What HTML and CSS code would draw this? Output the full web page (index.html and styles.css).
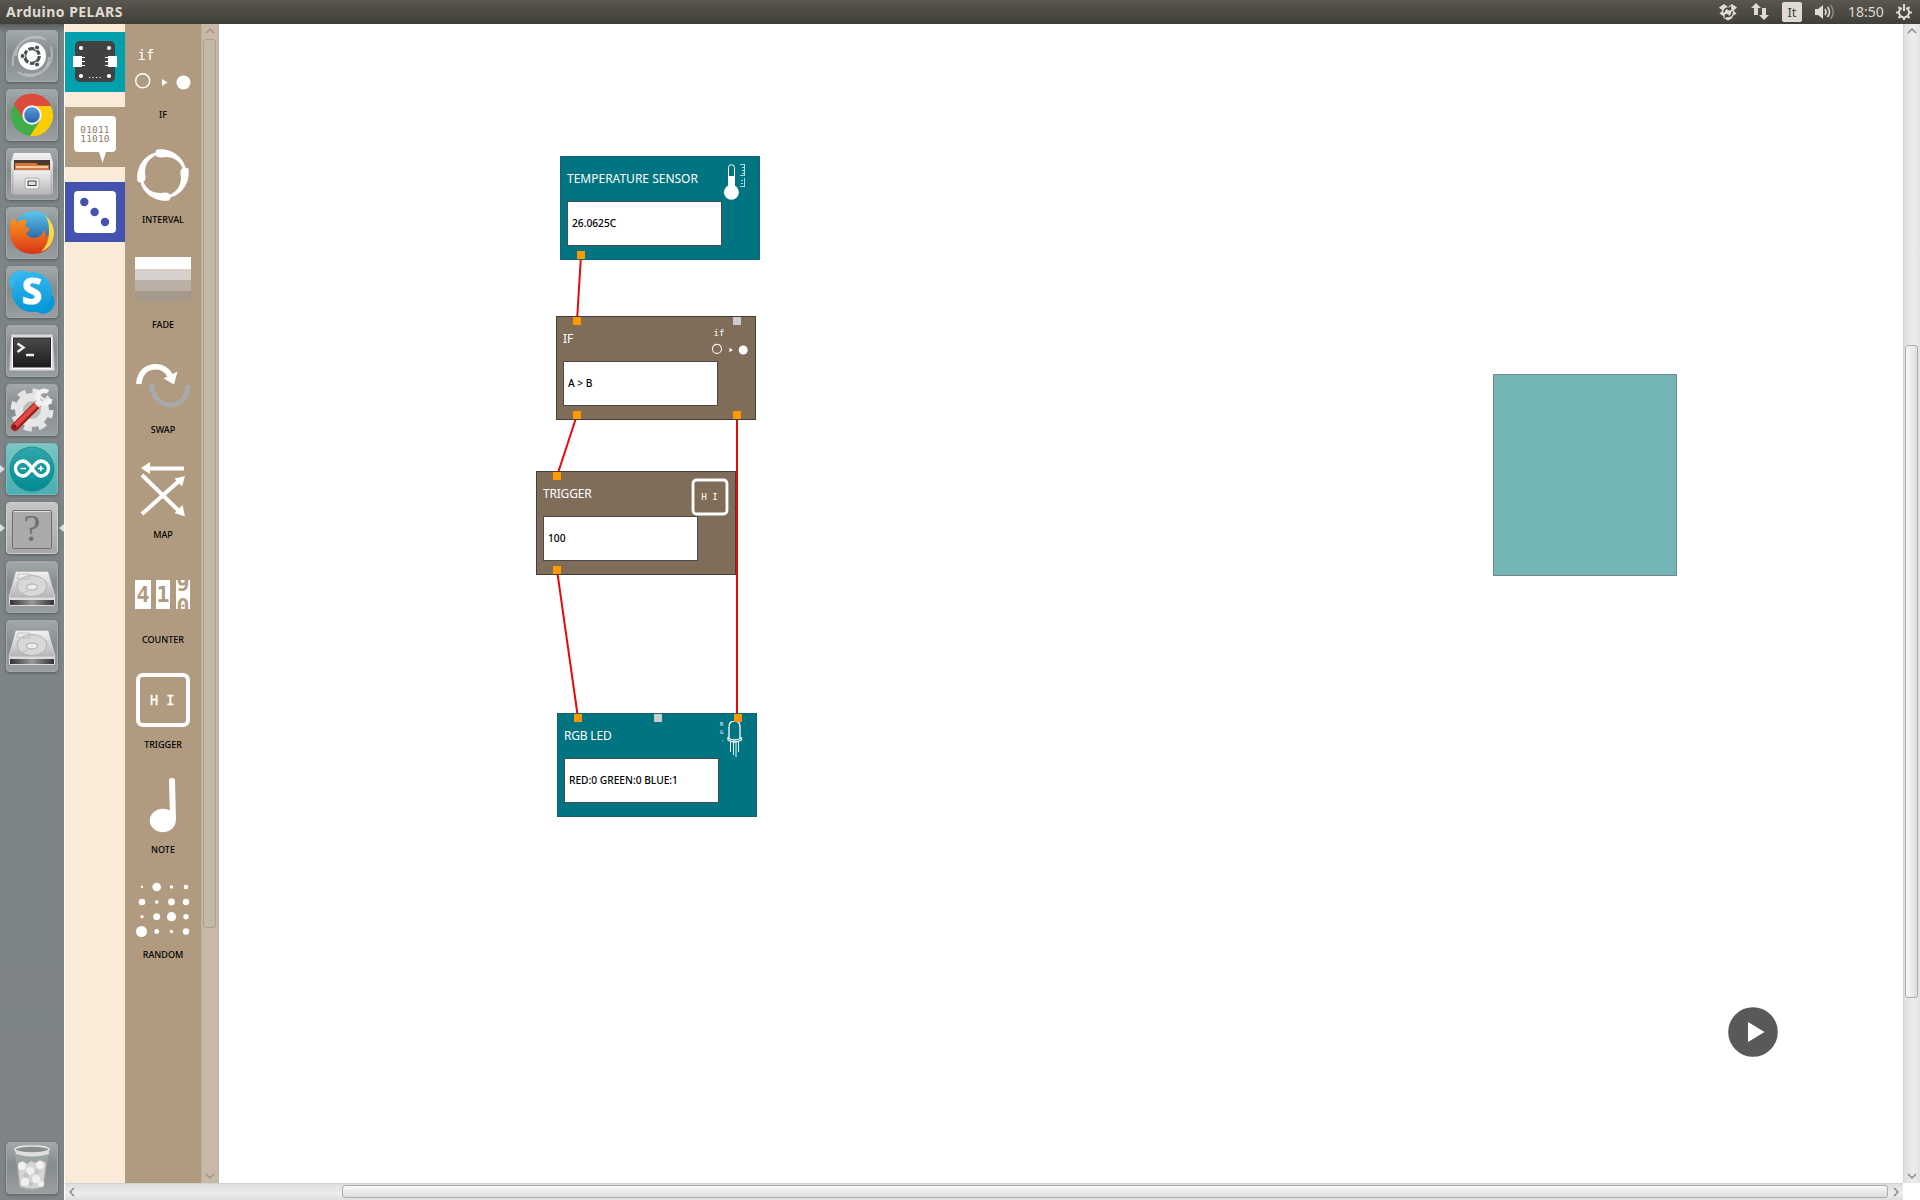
FILE: index.html
```html
<!DOCTYPE html>
<html lang="it">
<head>
<meta charset="utf-8">
<title>Arduino PELARS</title>
<link rel="stylesheet" href="styles.css">
</head>
<body>
<svg class="defs" width="0" height="0" aria-hidden="true">
  <defs>
    <linearGradient id="metal" x1="0" y1="0" x2="0" y2="1"><stop offset="0" stop-color="#f2f2f2"/><stop offset="1" stop-color="#b4b4b4"/></linearGradient>
    <linearGradient id="darkmetal" x1="0" y1="0" x2="1" y2="0"><stop offset="0" stop-color="#333"/><stop offset=".5" stop-color="#999"/><stop offset="1" stop-color="#333"/></linearGradient>
    <linearGradient id="screen" x1="0" y1="0" x2="0" y2="1"><stop offset="0" stop-color="#4a4a4a"/><stop offset="1" stop-color="#1c1c1c"/></linearGradient>
    <linearGradient id="fox" x1="0" y1="0" x2="0" y2="1"><stop offset="0" stop-color="#f7a01f"/><stop offset=".5" stop-color="#ee6a1c"/><stop offset="1" stop-color="#d83418"/></linearGradient>
    <linearGradient id="globe" x1="0" y1="0" x2="0" y2="1"><stop offset="0" stop-color="#5cc8ef"/><stop offset="1" stop-color="#153f8a"/></linearGradient>
    <linearGradient id="skype" x1="0" y1="0" x2="0" y2="1"><stop offset="0" stop-color="#35b6ec"/><stop offset="1" stop-color="#0597d9"/></linearGradient>
    <linearGradient id="teal" x1="0" y1="0" x2="0" y2="1"><stop offset="0" stop-color="#31a7aa"/><stop offset="1" stop-color="#008b90"/></linearGradient>
    <linearGradient id="blue" x1="0" y1="0" x2="0" y2="1"><stop offset="0" stop-color="#5b9bd8"/><stop offset="1" stop-color="#245fae"/></linearGradient>
  </defs>
  <symbol id="i-disk" viewBox="0 0 52 52">
    <path d="M10 11H42L49 37H3Z" fill="url(#metal)" stroke="#eee" stroke-width=".6"/>
    <ellipse cx="26" cy="25" rx="15" ry="10.5" fill="#d8d8d8" stroke="#b0b0b0"/><ellipse cx="26" cy="26" rx="5.5" ry="3" fill="#ececec" stroke="#aaa"/>
    <path d="M12 13H24V18H11ZM11 34L22 30" fill="none" stroke="#bbb" stroke-width=".8"/>
    <path d="M3 37H49V43Q49 45 47 45H5Q3 45 3 43Z" fill="#ddd"/><path d="M4 39H48V44H4Z" fill="url(#darkmetal)"/>
  </symbol>
</svg>

<header class="topbar">
  <span class="app-title">Arduino PELARS</span>
  <div class="tray">
    <svg class="t-dropbox" width="18" height="18" viewBox="0 0 18 18"><path d="M5 1L9 4L13 1L18 4.5L14.5 7.5L17.5 10.5L13.5 13.2V15L9 17.5L4.500 15V13.200L.5 10.500L3.500 7.500L0 4.500Z" fill="#dfdbd2"/><path d="M5 9.500A4 4 0 0 1 11.500 6M13 8.500A4 4 0 0 1 6.500 12.500M11.500 3.500V6.500H8.500M6.500 15V12H9.500" fill="none" stroke="#45433c" stroke-width="1.500"/></svg>
    <svg class="t-net" width="18" height="17" viewBox="0 0 18 17"><path d="M5 0L10 5H7V12H3V5H0ZM13 17L8 12H11V5H15V12H18Z" fill="#dfdbd2"/></svg>
    <span class="lang">It</span>
    <svg class="t-sound" width="21" height="16" viewBox="0 0 21 16"><path d="M0 5H3L8 1V15L3 11H0Z" fill="#dfdbd2"/><path d="M10 5Q12 8 10 11M12.500 3Q16.500 8 12.500 13" fill="none" stroke="#dfdbd2" stroke-width="1.600"/><path d="M15.500 1Q21 8 15.500 15" fill="none" stroke="#8c8980" stroke-width="1.600"/></svg>
    <span class="clock">18:50</span>
    <svg class="t-gear" width="16" height="16" viewBox="0 0 16 16"><path d="M5.700 4A5 5 0 1 0 10.300 4" fill="none" stroke="#dfdbd2" stroke-width="2"/><path d="M8 0V7M0 8.500H3M13 8.500H16M2.500 14L4.500 12M13.500 14L11.500 12M2.500 3L4.500 5M13.500 3L11.500 5M8 13V16" stroke="#dfdbd2" stroke-width="2.200"/></svg>
  </div>
</header>

<div class="desktop">
  <nav class="launcher">
    <div class="tile"><svg viewBox="0 0 52 52"><path d="M7 36C5 16 20 5 34 8M45 17C50 35 35 48 18 44M12 42C25 51 43 43 43 27M40 10C27 2 10 10 10 26" fill="none" stroke="#c6ced1" stroke-width="2" opacity=".65"/><circle cx="26" cy="26" r="14" fill="#fff"/><circle cx="26" cy="26" r="7.300" fill="none" stroke="#4c5254" stroke-width="3.200" stroke-dasharray="13.500 1.800"/><g fill="#4c5254" stroke="#fff"><circle cx="16.500" cy="26" r="2.500"/><circle cx="31" cy="17.500" r="2.500"/><circle cx="31" cy="34.500" r="2.500"/></g></svg></div>
    <div class="tile"><svg viewBox="0 0 52 52"><circle cx="26" cy="26" r="21" fill="#3fae49"/><path d="M26 26L8 15A21 21 0 0 1 45 17H26Z" fill="#dd4035"/><path d="M26 17H45A21 21 0 0 1 24 47L34.500 31Z" fill="#fccd05"/><path d="M8 15L18 31L26 17H45A21 21 0 0 0 8 15Z" fill="#dd4b3f"/><circle cx="26" cy="26" r="9.700" fill="#f4f4f4"/><circle cx="26" cy="26" r="7.800" fill="url(#blue)"/></svg></div>
    <div class="tile"><svg viewBox="0 0 52 52"><path d="M8 5H44L47 14V46H5V14Z" fill="url(#metal)"/><rect x="8" y="12" width="36" height="11" fill="#4b3a31"/><path d="M9 15H30L32 17H43V22H9Z" fill="#d9773b"/><path d="M10 19H42" stroke="#f4c9a0" stroke-width="2"/><rect x="7" y="22" width="38" height="25" rx="1" fill="url(#metal)" stroke="#999" stroke-width=".5"/><rect x="19" y="30" width="14" height="11" rx="2" fill="#f1f1f1" stroke="#aaa"/><rect x="22" y="33" width="8" height="4.500" fill="#ddd" stroke="#444"/></svg></div>
    <div class="tile"><svg viewBox="0 0 52 52"><circle cx="28" cy="24" r="20" fill="url(#globe)"/><path d="M6 11L11 15Q16 12 21 13L19 19L24 22L20 27Q25 33 32 30Q37 28 38 22Q41 27 39 32L44 25Q45 15 39 8Q49 16 48 29Q45 47 26 47Q8 46 4 29Q3 19 6 11Z" fill="url(#fox)"/><path d="M39 8Q49 17 48 28Q46 41 35 45Q44 35 43 23Q43 14 39 8Z" fill="#fbd84b"/></svg></div>
    <div class="tile"><svg viewBox="0 0 52 52"><circle cx="15" cy="16" r="11.500" fill="#35b6ec"/><circle cx="37" cy="36" r="11.500" fill="#0597d9"/><circle cx="26" cy="26" r="20" fill="url(#skype)"/><text x="26" y="38" text-anchor="middle" class="round" font-size="36" fill="#fff" stroke="#fff" stroke-width="1.200">S</text></svg></div>
    <div class="tile"><svg viewBox="0 0 52 52"><path d="M5 9H47L49 46H3Z" fill="#d9d9d9" stroke="#888" stroke-width=".6"/><rect x="6" y="12" width="40" height="32" fill="#fff"/><rect x="7.500" y="13" width="37" height="29" fill="url(#screen)" stroke="#222"/><path d="M11.500 18.500L17.500 22.500L11.500 27M20 30H28" fill="none" stroke="#eee" stroke-width="2.400"/></svg></div>
    <div class="tile"><svg viewBox="0 0 52 52"><circle cx="26" cy="26" r="19" fill="none" stroke="#e4e4e4" stroke-width="5" stroke-dasharray="8 6.920"/><circle cx="26" cy="26" r="13" fill="#bbb" stroke="#e6e6e6" stroke-width="8"/><path d="M9 43L33 19" stroke="#a51e1e" stroke-width="8" stroke-linecap="round"/><path d="M9 42L32 19" stroke="#e04a48" stroke-width="4.500" stroke-linecap="round"/><path d="M30 17L35 22" stroke="#eee" stroke-width="5"/><path d="M42 8A6.500 6.500 0 1 0 44.500 15" fill="none" stroke="#f2f2f2" stroke-width="4.500"/><circle cx="8.500" cy="42.500" r="2" fill="#7d1414"/></svg></div>
    <div class="tile tile-teal running"><svg viewBox="0 0 52 52"><circle cx="26" cy="26" r="22" fill="url(#teal)" stroke="#078187" stroke-width=".7"/><path d="M26 25.500C22 19.500 20 18 17 18A7.300 7.300 0 0 0 17 33C20 33 22 31.500 26 25.500C30 19.500 32 18 35 18A7.300 7.300 0 0 1 35 33C32 33 30 31.500 26 25.500Z" fill="none" stroke="#fff" stroke-width="3.400"/><path d="M14.500 25.500H20M32 25.500H37.600M34.800 22.700V28.300" stroke="#fff" stroke-width="1.500"/></svg></div>
    <div class="tile tile-light running focused"><svg viewBox="0 0 52 52"><rect x="6.500" y="8.500" width="39" height="38" rx="1" fill="#aaa" stroke="#6e6e6e"/><path d="M8 9.500H44" stroke="#e0e0e0"/><text x="26" y="39" text-anchor="middle" class="serif" font-size="38" fill="#707070">?</text></svg></div>
    <div class="tile"><svg><use href="#i-disk"/></svg></div>
    <div class="tile"><svg><use href="#i-disk"/></svg></div>
    <div class="tile trash"><svg viewBox="0 0 52 52"><path d="M9 8H43L38 46Q26 51 13 46Z" fill="#a9adad" opacity=".6"/><path d="M12 22L17 19L21 22L25 19L30 21L34 18L40 21L37 44Q26 49 14 44Z" fill="#d4d5d3"/><g fill="#f0f0ee"><circle cx="16" cy="24" r="4"/><circle cx="24" cy="29" r="4"/><circle cx="34" cy="23" r="4"/><circle cx="19" cy="40" r="4"/><circle cx="30" cy="37" r="4"/><circle cx="35" cy="42" r="3"/></g><g fill="#bfc1bf"><circle cx="20" cy="33" r="2.500"/><circle cx="31" cy="30" r="2"/><circle cx="25" cy="42" r="2"/></g><ellipse cx="26" cy="7.500" rx="17" ry="3.500" fill="#8a8f8f" stroke="#e4e4e2" stroke-width="1.600"/><path d="M9 8Q26 15 43 8V12Q26 17 10 12Z" fill="#dededc"/></svg></div>
  </nav>

  <main class="window">
    <div class="workspace">
      <aside class="categories">
        <div class="category cat-board"><svg width="60" height="60"><rect x="10" y="9" width="40" height="41" rx="5" fill="#414042"/><path d="M8 24H17V35H8ZM43 24H52V35H43Z" fill="#fff"/><path d="M17 25.500H20M17 29.500H20M17 33.500H20M40 25.500H43M40 29.500H43M40 33.500H43" stroke="#fff" stroke-width="1.200"/><g fill="#fff"><circle cx="16" cy="16" r="2.100"/><circle cx="44" cy="16" r="2.100"/><circle cx="16" cy="44" r="2.100"/><circle cx="44" cy="44" r="2.100"/></g><path d="M24 45.500H36" stroke="#fff" stroke-width="1.200" stroke-dasharray="1.200 2.300"/></svg></div>
        <div class="category cat-logic"><svg width="60" height="60"><path d="M13 9H47Q51 9 51 13V41Q51 45 47 45H41L37.500 56L34 45H13Q9 45 9 41V13Q9 9 13 9Z" fill="#fff"/><text x="15.300" y="26" class="mono" font-size="9.500" letter-spacing=".15" fill="#8d7b66">01011</text><text x="15.300" y="35" class="mono" font-size="9.500" letter-spacing=".15" fill="#8d7b66">11010</text></svg></div>
        <div class="category cat-dice"><svg width="60" height="60"><rect x="9" y="9" width="42" height="42" rx="4" fill="#fff"/><g fill="#4453b0"><circle cx="19.300" cy="20" r="4.200"/><circle cx="29.600" cy="30" r="4.200"/><circle cx="40" cy="40" r="4.200"/></g></svg></div>
      </aside>

      <aside class="tools">
        <div class="tool"><svg viewBox="0 0 56 56"><text x="2.500" y="18" class="mono" font-size="14" fill="#fff">if</text><circle cx="7.700" cy="38.700" r="7" fill="none" stroke="#fff" stroke-width="1.400"/><path d="M27 37L32.500 40.500L27 44Z" fill="#fff"/><circle cx="48.500" cy="40.500" r="7" fill="#fff"/></svg><span>IF</span></div>
        <div class="tool"><svg viewBox="0 0 56 56" fill="#fff"><path id="leaf" d="M22 2.500C37 .5 50 11 51 24L49 25C46 14 39 10 30 10C24 11.500 20.500 10 20.500 6Q20.500 3 22 2.500Z"/><use href="#leaf" transform="rotate(90 28 28)"/><use href="#leaf" transform="rotate(180 28 28)"/><use href="#leaf" transform="rotate(270 28 28)"/></svg><span>INTERVAL</span></div>
        <div class="tool"><svg viewBox="0 0 56 56"><path d="M0 5H56V17H0Z" fill="#fff"/><path d="M0 17H56V28H0Z" fill="#d6d1cd"/><path d="M0 28H56V39H0Z" fill="#bab0a6"/><path d="M0 39H56V49.500H0Z" fill="#a6998b"/></svg><span>FADE</span></div>
        <div class="tool"><svg viewBox="0 0 56 56"><path d="M16.700 27C17 40 26 48 35 48C46 48 53 40 53 28" fill="none" stroke="#a9a9a9" stroke-width="5"/><path d="M3.800 27C5 15 12 9.700 21 9.700C28 9.700 33 14 36 20" fill="none" stroke="#fff" stroke-width="5.600"/><path d="M28.500 21.500L42.500 14.500L39 27.500Z" fill="#fff"/></svg><span>SWAP</span></div>
        <div class="tool"><svg viewBox="0 0 56 56"><path d="M49 6.500H12M7 13L45 50M7 52L45 18" fill="none" stroke="#fff" stroke-width="4"/><path d="M6 6L15 0V12ZM50 54.500L39.500 51L47.500 43ZM50 14L47 24.500L39.500 16.500Z" fill="#fff"/></svg><span>MAP</span></div>
        <div class="tool"><svg viewBox="0 0 56 56"><path d="M0 13H16V42H0ZM21 13H35V42H21ZM41 13H55V42H41Z" fill="#fff"/><g class="monobold" font-size="21.500" fill="#b09b80" text-anchor="middle"><text x="8" y="35">4</text><text x="28" y="35">1</text></g><svg x="41" y="13" width="14" height="29" viewBox="41 13 14 29" class="monobold" font-size="21.500" fill="#b09b80" text-anchor="middle"><text x="48" y="24">9</text><text x="48" y="46.500">0</text></svg></svg><span>COUNTER</span></div>
        <div class="tool"><svg viewBox="0 0 56 56"><rect x="3" y="3" width="50" height="50" rx="5" fill="none" stroke="#fff" stroke-width="4"/><text x="15" y="32.500" class="mono" font-size="13.500" fill="#fff" stroke="#fff" stroke-width=".3">H I</text></svg><span>TRIGGER</span></div>
        <div class="tool"><svg viewBox="0 0 56 56" fill="#fff"><ellipse cx="27.800" cy="43.500" rx="13" ry="11.700"/><path d="M34 3Q34 1 37 1T40 3L41 43H35Z"/></svg><span>NOTE</span></div>
        <div class="tool"><svg viewBox="0 0 56 56" fill="#fff"><circle cx="7" cy="5" r="1.200"/><circle cx="21.700" cy="5" r="4.300"/><circle cx="36.500" cy="5" r="1.700"/><circle cx="51" cy="5" r="2.300"/><circle cx="7" cy="20" r="3.300"/><circle cx="21.700" cy="20" r="1.800"/><circle cx="36.500" cy="20" r="3.400"/><circle cx="51" cy="20" r="3.200"/><circle cx="7" cy="34.700" r="1.600"/><circle cx="21.700" cy="34.700" r="3.400"/><circle cx="36.500" cy="34.700" r="4.600"/><circle cx="51" cy="34.700" r="2.700"/><circle cx="6.500" cy="49.500" r="5.500"/><circle cx="21.700" cy="49.500" r="2.400"/><circle cx="36.500" cy="49.500" r="1.700"/><circle cx="51" cy="49.500" r="3.200"/></svg><span>RANDOM</span></div>
      </aside>
      <div class="scroll vertical palette-scroll">
        <svg class="arrow" viewBox="0 0 10 6"><path d="M1 5L5 1L9 5"/></svg><div class="track"><div class="thumb"></div></div><svg class="arrow" viewBox="0 0 10 6"><path d="M1 1L5 5L9 1"/></svg>
      </div>

      <section class="canvas">
        <svg class="wires" width="1684" height="1159" viewBox="219 24 1684 1159"><path d="M581 255L577 321M577 415L557 476M737 415V718M557 570L578 718"/></svg>
        <article class="node hw n-temp">
          <div class="head"><h2>TEMPERATURE SENSOR</h2><svg viewBox="0 0 36 36"><path d="M12.500 24V3.500Q12.500 .7 15.500 .7T18.500 3.500V24" fill="none" stroke="#fff"/><path d="M12 12H19V24H12Z" fill="#fff"/><circle cx="15.400" cy="28.300" r="7.500" fill="#fff"/><path d="M28.500 0V12M28.500 14V23M24 .5H29M26 3.500H29M26 6.500H29M26 9.500H29M24 11.500H29M25 16.500H27M25 19.500H27M24 22.500H29" stroke="#dff" stroke-width=".9" opacity=".85"/></svg></div>
          <div class="field">26.0625C</div><i class="port bot"></i>
        </article>
        <article class="node logic n-if">
          <div class="head"><h2>IF</h2><svg viewBox="0 0 56 56"><text x="2.500" y="18" class="mono" font-size="14" fill="#fff">if</text><circle cx="7.700" cy="38.700" r="7" fill="none" stroke="#fff" stroke-width="1.600"/><path d="M27 37L32.500 40.500L27 44Z" fill="#fff"/><circle cx="48.500" cy="40.500" r="7" fill="#fff"/></svg></div>
          <div class="field">A &gt; B</div><i class="port top"></i><i class="port top last free"></i><i class="port bot"></i><i class="port bot last"></i>
        </article>
        <article class="node logic n-trigger">
          <div class="head"><h2>TRIGGER</h2><svg viewBox="0 0 56 56"><rect x="3" y="3" width="50" height="50" rx="5" fill="none" stroke="#fff" stroke-width="4.200"/><text x="15" y="32.500" class="mono" font-size="13.500" fill="#fff">H I</text></svg></div>
          <div class="field">100</div><i class="port top"></i><i class="port bot"></i>
        </article>
        <article class="node hw n-led">
          <div class="head"><h2>RGB LED</h2><svg viewBox="0 0 36 36"><path d="M16 17V6Q16 0 21.500 0T27 6V17M15 17Q21 21 28.500 17V19Q21 23 15 19Z" fill="none" stroke="#fff" stroke-width="1.300"/><path d="M17.500 20V31M20.500 21V34M23 21V36M25.500 20V31" stroke="#e8ffff" stroke-width="1"/><g class="mono" font-size="5.500" fill="#fff"><text x="7" y="5">R</text><text x="7" y="13">G</text><text x="8" y="23">'</text></g></svg></div>
          <div class="field">RED:0 GREEN:0 BLUE:1</div><i class="port top"></i><i class="port top mid free"></i><i class="port top last"></i>
        </article>
        <div class="area"></div>
        <svg class="play" width="50" height="50"><circle cx="25" cy="25" r="24.800" fill="#59595b"/><path d="M20 15V35L36.500 25Z" fill="#fff"/></svg>
      </section>
      <div class="scroll vertical page-scroll">
        <svg class="arrow" viewBox="0 0 10 6"><path d="M1 5L5 1L9 5"/></svg><div class="track"><div class="thumb"></div></div><svg class="arrow" viewBox="0 0 10 6"><path d="M1 1L5 5L9 1"/></svg>
      </div>
    </div>
    <div class="bottom">
      <div class="scroll horizontal"><svg class="arrow" viewBox="0 0 6 10"><path d="M5 1L1 5L5 9"/></svg><div class="track"><div class="thumb"></div></div><svg class="arrow" viewBox="0 0 6 10"><path d="M1 1L5 5L1 9"/></svg></div>
    </div>
  </main>
</div>
</body>
</html>
```
FILE: styles.css
```css
* { box-sizing: border-box; }
body {
  margin: 0;
  width: 1920px;
  height: 1200px;
  overflow: hidden;
  display: flex;
  flex-direction: column;
  background: #fff;
  font-family: "Noto Sans", "Open Sans", sans-serif;
}
svg { display: block; flex: none; }
.defs { position: absolute; }
.mono { font-family: "DejaVu Sans Mono", monospace; }
.monobold { font-family: "DejaVu Sans Mono", monospace; font-weight: bold; }
.round { font-family: "Open Sans", sans-serif; font-weight: bold; }
.serif { font-family: "Liberation Serif", serif; font-weight: normal; }

/* top panel */
.topbar {
  height: 24px;
  flex: none;
  display: flex;
  align-items: center;
  justify-content: space-between;
  padding: 0 8px 1px 6px;
  background: linear-gradient(#59574f, #403f39);
  color: #dfdbd2;
}
.app-title { font-size: 14px; font-weight: 700; letter-spacing: .48px; line-height: 20px; }
.tray { display: flex; align-items: center; }
.t-net { margin-left: 14px; }
.lang {
  width: 20px;
  height: 20px;
  margin-left: 13px;
  border-radius: 2px;
  background: #dfdbd2;
  color: #46443d;
  font-size: 13px;
  line-height: 20px;
  text-align: center;
}
.t-sound { margin-left: 13px; }
.clock { width: 37px; margin-left: 12px; font-size: 14px; line-height: 20px; white-space: nowrap; }
.t-gear { margin-left: 11px; }

/* launcher */
.desktop { flex: 1; display: flex; min-height: 0; }
.launcher {
  width: 64px;
  flex: none;
  display: flex;
  flex-direction: column;
  gap: 7px;
  padding: 6px;
  background: linear-gradient(#585d5f 0, #7d8486 8px, #7f8587 100%);
}
.tile {
  position: relative;
  width: 52px;
  height: 52px;
  flex: none;
  border: 1px solid #a3a9ab;
  border-radius: 4px;
  background: linear-gradient(#a3a9aa, #858c8e 45%, #999ea0);
  box-shadow: 0 1px 3px #555b5d;
}
.tile svg { width: 52px; height: 52px; margin: -1px; }
.tile-teal { background: linear-gradient(#7cc5c5, #4aaeb0); border-color: #74c0c0; }
.tile-light { background: linear-gradient(#c5c5c5, #a8a8a8); border-color: #d0d0d0; }
.running::before, .focused::after {
  content: "";
  position: absolute;
  top: 21px;
  border: 4px solid transparent;
}
.running::before { left: -7px; border-left: 5px solid #dcdedf; border-right: 0; }
.focused::after { right: -7px; border-right: 5px solid #dcdedf; border-left: 0; }
.trash { margin-top: auto; }

/* application window */
.window { flex: 1; display: flex; flex-direction: column; min-width: 0; padding-left: 1px; }
.workspace { flex: 1; display: flex; min-height: 0; }
.categories {
  width: 60px;
  flex: none;
  display: flex;
  flex-direction: column;
  gap: 15px;
  padding-top: 8px;
  background: #f9ebd7;
}
.category { height: 60px; }
.cat-board { background: #02a0ad; }
.cat-logic { background: #b09b80; }
.cat-dice { background: #4453b0; }
.tools { width: 76px; flex: none; padding-top: 18px; background: #b09b80; }
.tool {
  height: 105px;
  display: flex;
  flex-direction: column;
  align-items: center;
  color: #000;
  font-size: 9px;
  font-weight: 500;
  line-height: 12px;
}
.tool svg { width: 56px; height: 56px; }
.tool svg svg { width: 14px; height: 29px; }
.tool span { margin-top: 11px; }

/* scroll bars */
.scroll { display: flex; flex: none; align-items: center; background: #e8e8e8; }
.vertical { flex-direction: column; padding: 4px 1px 4px 0; border-left: 1px solid #d2d2d2; }
.arrow { width: 10px; height: 6px; fill: none; stroke: #858585; stroke-width: 1.4; }
.track { flex: 1; min-height: 0; }
.thumb { border: 1px solid #acacac; border-radius: 3px; background: linear-gradient(90deg, #f8f8f8, #dedede); }
.page-scroll { width: 17px; background: linear-gradient(90deg, #dedede, #ededed 60%, #e2e2e2); }
.page-scroll .thumb { width: 13px; height: 653px; margin-top: 311px; }
.palette-scroll { width: 18px; border-left-color: #bdae9d; border-right: 1px solid #b7b5b8; background: #c8b9a7; }
.palette-scroll .thumb { width: 13px; height: 889px; margin-top: 5px; border-color: #ad9f8f; background: #c6b8a7; }
.palette-scroll .arrow { stroke: #a29485; }
.bottom { height: 17px; }
.horizontal {
  width: 1838px;
  height: 17px;
  padding: 0 4px 1px;
  border-top: 1px solid #d2d2d2;
  background: linear-gradient(#dedede, #ededed 60%, #dedede);
}
.horizontal .arrow { width: 6px; height: 10px; }
.horizontal .thumb { width: 1546px; height: 13px; margin-left: 267px; background: linear-gradient(#f8f8f8, #dcdcdc); }

/* node canvas */
.canvas { position: relative; flex: 1; background: #fff; }
.wires { position: absolute; left: 0; top: 0; fill: none; stroke: #e60b0b; stroke-width: 2; }
.node { position: absolute; width: 200px; height: 104px; border: 1px solid; }
.hw { background: #007480; border-color: #17636d; }
.logic { background: #7f6d5a; border-color: #453e37; }
.n-temp { left: 341px; top: 132px; }
.n-if { left: 337px; top: 292px; }
.n-trigger { left: 317px; top: 447px; }
.n-led { left: 338px; top: 689px; }
.head { height: 44px; display: flex; justify-content: space-between; padding: 7px 7px 0 6px; }
.head h2 {
  margin: 7px 0 0;
  color: #fff;
  font-size: 12px;
  font-weight: 400;
  line-height: 16px;
  white-space: nowrap;
}
.n-trigger h2, .n-led h2 { letter-spacing: -.2px; }
.head svg { width: 36px; height: 36px; }
.n-trigger .head svg { width: 38px; height: 38px; margin: -1px; }
.field {
  width: 155px;
  height: 45px;
  margin-left: 6px;
  padding-left: 4px;
  border: 1px solid #4a4a4a;
  background: #fff;
  color: #000;
  font-size: 10.2px;
  font-weight: 500;
  line-height: 42px;
}
.port { position: absolute; left: 16px; width: 8px; height: 8px; background: #f90; }
.top { top: 0; }
.bot { top: 94px; }
.mid { left: 96px; }
.last { left: 176px; }
.free { background: #ccc; }
.area {
  position: absolute;
  left: 1274px;
  top: 350px;
  width: 184px;
  height: 202px;
  border: 1px solid #758787;
  background: #74b6b5;
}
.play { position: absolute; left: 1509px; top: 983px; }
```
